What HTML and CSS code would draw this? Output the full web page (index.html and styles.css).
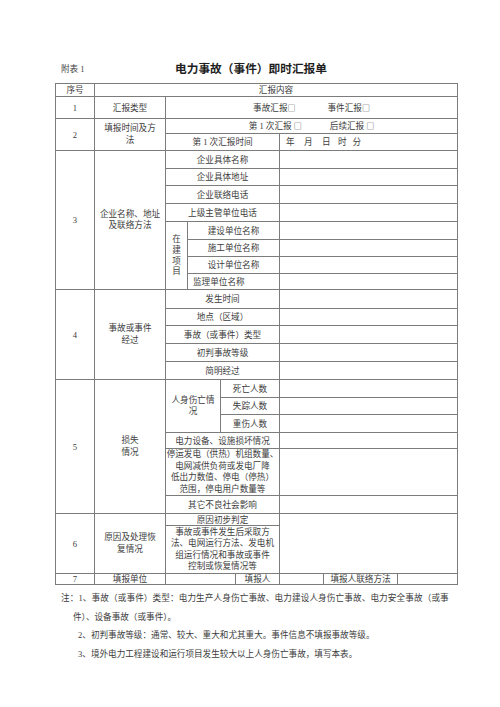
FILE: index.html
```html
<!DOCTYPE html>
<html lang="zh-CN">
<head>
<meta charset="utf-8">
<title>电力事故（事件）即时汇报单</title>
<link rel="stylesheet" href="styles.css">
</head>
<body>
<div class="page">
  <div class="doc-head">
    <span class="annex">附表 1</span>
    <h1 class="title">电力事故（事件）即时汇报单</h1>
  </div>

  <table class="report">
    <colgroup>
      <col class="w39"><col class="w71"><col class="w22"><col class="w33"><col class="w15"><col class="w44"><col class="w44"><col class="w74"><col class="w60">
    </colgroup>
    <tbody>
      <tr class="h13"><td>序号</td><td colspan="8">汇报内容</td></tr>
      <tr class="h22"><td>1</td><td>汇报类型</td><td colspan="7"><span class="opt">事故汇报<span class="box">□</span></span><span class="opt">事件汇报<span class="box">□</span></span></td></tr>
      <tr class="h15"><td rowspan="2">2</td><td rowspan="2" class="ml">填报时间及方<br>法</td><td colspan="7"><span class="opt2">第 1 次汇报 <span class="box">□</span></span><span class="opt2">后续汇报 <span class="box">□</span></span></td></tr>
      <tr class="h17"><td colspan="4">第 1 次汇报时间</td><td colspan="3" class="left date"><span>年</span><span>月</span><span>日</span><span>时</span><span>分</span></td></tr>

      <tr class="h18"><td rowspan="8">3</td><td rowspan="8" class="ml">企业名称、地址<br>及联络方法</td><td colspan="4">企业具体名称</td><td colspan="3"></td></tr>
      <tr class="h17"><td colspan="4">企业具体地址</td><td colspan="3"></td></tr>
      <tr class="h18"><td colspan="4">企业联络电话</td><td colspan="3"></td></tr>
      <tr class="h18"><td colspan="4">上级主管单位电话</td><td colspan="3"></td></tr>
      <tr class="h18"><td rowspan="4" class="vert">在<br>建<br>项<br>目</td><td colspan="3">建设单位名称</td><td colspan="3"></td></tr>
      <tr class="h17"><td colspan="3">施工单位名称</td><td colspan="3"></td></tr>
      <tr class="h17"><td colspan="3">设计单位名称</td><td colspan="3"></td></tr>
      <tr class="h16"><td colspan="3" class="left pad5">监理单位名称</td><td colspan="3"></td></tr>

      <tr class="h19"><td rowspan="5">4</td><td rowspan="5" class="ml">事故或事件<br>经过</td><td colspan="4">发生时间</td><td colspan="3"></td></tr>
      <tr class="h17"><td colspan="4">地点（区域）</td><td colspan="3"></td></tr>
      <tr class="h18"><td colspan="4">事故（或事件）类型</td><td colspan="3"></td></tr>
      <tr class="h18"><td colspan="4">初判事故等级</td><td colspan="3"></td></tr>
      <tr class="h18"><td colspan="4">简明经过</td><td colspan="3"></td></tr>

      <tr class="h18"><td rowspan="6">5</td><td rowspan="6" class="ml">损失<br>情况</td><td colspan="2" rowspan="3" class="ml">人身伤亡情<br>况</td><td colspan="2">死亡人数</td><td colspan="3"></td></tr>
      <tr class="h17"><td colspan="2">失踪人数</td><td colspan="3"></td></tr>
      <tr class="h18"><td colspan="2">重伤人数</td><td colspan="3"></td></tr>
      <tr class="h16"><td colspan="4">电力设备、设施损坏情况</td><td colspan="3"></td></tr>
      <tr class="h46"><td colspan="4" class="ml">停运发电（供热）机组数量、<br>电网减供负荷或发电厂降<br>低出力数值、停电（停热）<br>范围，停电用户数量等</td><td colspan="3"></td></tr>
      <tr class="h18"><td colspan="4">其它不良社会影响</td><td colspan="3"></td></tr>

      <tr class="h12"><td rowspan="2">6</td><td rowspan="2" class="ml">原因及处理恢<br>复情况</td><td colspan="4">原因初步判定</td><td colspan="3" rowspan="2"></td></tr>
      <tr class="h48"><td colspan="4" class="ml">事故或事件发生后采取方<br>法、电网运行方法、发电机<br>组运行情况和事故或事件<br>控制或恢复情况等</td></tr>

      <tr class="h11"><td>7</td><td>填报单位</td><td colspan="3"></td><td>填报人</td><td></td><td>填报人联络方法</td><td></td></tr>
    </tbody>
  </table>

  <div class="notes">
    <p class="note first">注：1、事故（或事件）类型：电力生产人身伤亡事故、电力建设人身伤亡事故、电力安全事故（或事</p>
    <p class="note cont">件）、设备事故（或事件）。</p>
    <p class="note item">2、初判事故等级：通常、较大、重大和尤其重大。事件信息不填报事故等级。</p>
    <p class="note item">3、境外电力工程建设和运行项目发生较大以上人身伤亡事故，填写本表。</p>
  </div>
</div>
</body>
</html>
```

FILE: styles.css
```css
html, body {
  margin: 0;
  padding: 0;
  background: #ffffff;
}

body {
  font-family: "Liberation Serif", "Noto Sans CJK SC", serif;
  color: #3d3d3d;
}

.page {
  width: 402px;
  padding: 60px 43px 0 55px;
}

.doc-head {
  display: flex;
  align-items: center;
  height: 16px;
}

.annex {
  font-size: 8.6px;
  margin-left: 6px;
  width: 114px;
  color: #444444;
}

.title {
  margin: 0;
  font-family: "Noto Sans CJK SC", sans-serif;
  font-size: 11.7px;
  font-weight: 700;
  line-height: 16px;
  color: #1e1e1e;
}

.report {
  margin-top: 7px;
  width: 402px;
  table-layout: fixed;
  border-collapse: collapse;
  font-size: 8.6px;
}

.report td {
  border: 1px solid #7c7c7c;
  padding: 0;
  text-align: center;
  vertical-align: middle;
  line-height: 10px;
  white-space: nowrap;
  overflow: hidden;
}

.w39 { width: 39px; }
.w71 { width: 71px; }
.w22 { width: 22px; }
.w33 { width: 33px; }
.w15 { width: 15px; }
.w44 { width: 44px; }
.w74 { width: 74px; }
.w60 { width: 60px; }

.h11 { height: 11px; }
.h12 { height: 12px; }
.h13 { height: 13px; }
.h15 { height: 15px; }
.h16 { height: 16px; }
.h17 { height: 17px; }
.h18 { height: 18px; }
.h19 { height: 19px; }
.h22 { height: 22px; }
.h46 { height: 46px; }
.h48 { height: 48px; }

.report td.ml {
  line-height: 11.5px;
}

.report td.vert {
  line-height: 10.7px;
}

.report td.left {
  text-align: left;
}

.report td.pad5 {
  padding-left: 5px;
}

.box {
  font-family: "Noto Sans CJK SC", sans-serif;
  font-size: 8px;
}

.opt {
  display: inline-block;
  margin: 0 16px;
}

.opt2 {
  display: inline-block;
  margin: 0 14px;
}

.date {
  padding-left: 6px !important;
}

.date span {
  display: inline-block;
  margin-right: 9.4px;
}

.date span:nth-child(3) {
  margin-right: 7.4px;
}

.date span:nth-child(4) {
  margin-right: 6px;
}

.notes {
  margin-top: 4px;
}

.note {
  margin: 0;
  font-size: 8.6px;
  line-height: 18.5px;
  white-space: nowrap;
}

.note.first {
  margin-left: 6px;
  letter-spacing: 0.12px;
}

.note.cont {
  margin-left: 18px;
}

.note.item {
  margin-left: 23px;
}
```
